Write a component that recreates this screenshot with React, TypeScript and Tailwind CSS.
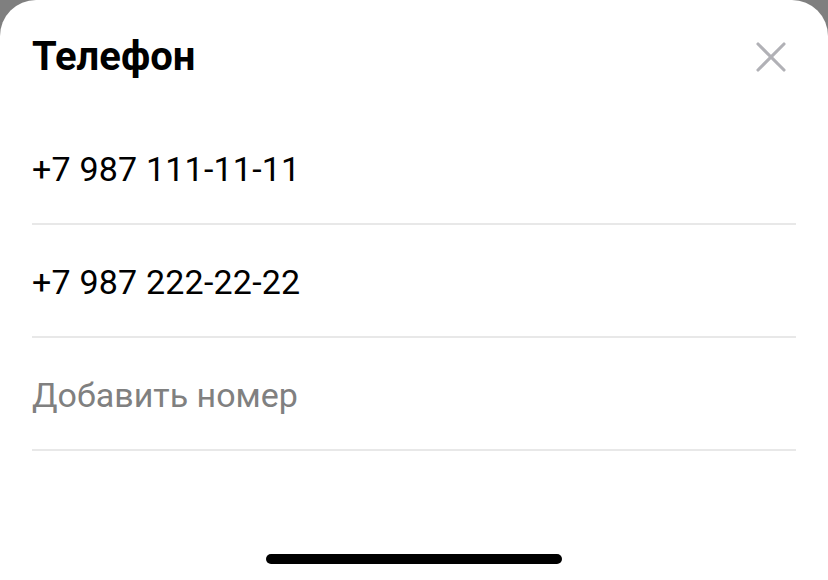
import { X } from "lucide-react";

const phones = ["+7 987 111-11-11", "+7 987 222-22-22"];

export default function App() {
  return (
    <div className="w-[828px] h-[580px] bg-[#7f7f7f] overflow-hidden font-['Roboto',sans-serif]">
      <div className="h-full bg-white rounded-t-[36px] flex flex-col">
        <div className="h-[112px] pl-8 pr-[31px] pt-[2px] flex items-center justify-between">
          <h1 className="text-[40px] font-bold text-black">Телефон</h1>
          <button className="w-[52px] h-[52px] flex items-center justify-center text-[#b1b1b6]">
            <X size={52} strokeWidth={1.45} />
          </button>
        </div>

        <div className="px-8">
          {phones.map((p) => (
            <div key={p} className="h-[113px] pt-[3px] flex items-center border-b-2 border-[#e8e8e8]">
              <span className="text-[34px] tracking-[0.2px] text-black">{p}</span>
            </div>
          ))}
          <div className="h-[113px] pt-[3px] flex items-center border-b-2 border-[#e8e8e8]">
            <span className="text-[34px] text-[#808080]">Добавить номер</span>
          </div>
        </div>

        <div className="mt-auto pb-[16px] flex justify-center">
          <div className="w-[296px] h-[10px] rounded-full bg-black" />
        </div>
      </div>
    </div>
  );
}
